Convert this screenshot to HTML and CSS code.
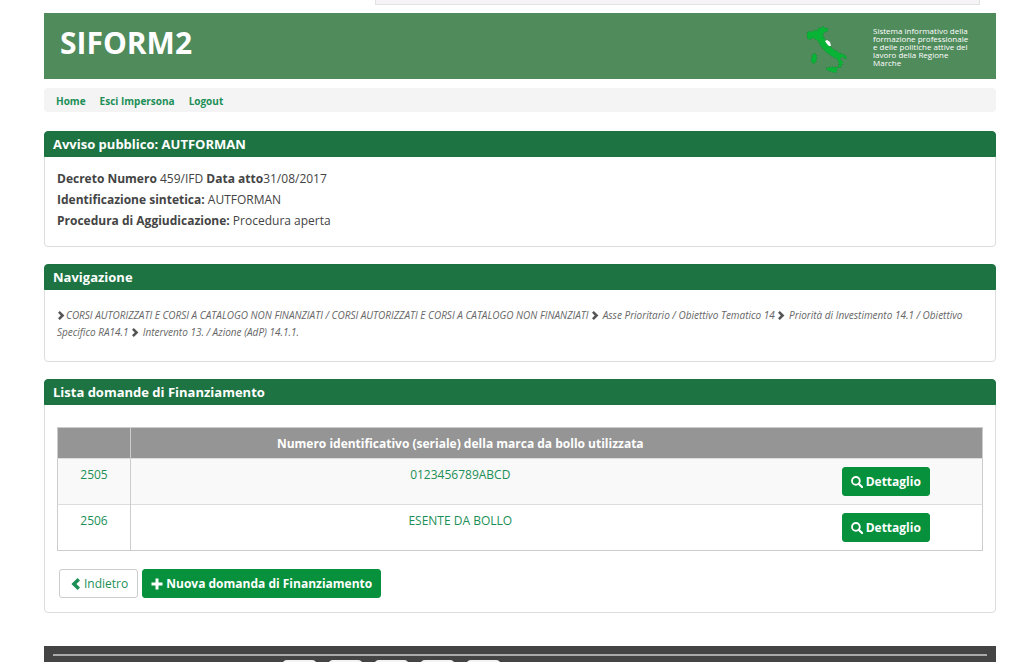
FILE: index.html
```html
<!DOCTYPE html>
<html lang="it">
<head>
<meta charset="utf-8">
<title>SIFORM2</title>
<link rel="stylesheet" href="styles.css">
</head>
<body>
<svg class="sprite" aria-hidden="true">
  <symbol id="chevron-right" viewBox="0 0 10 12"><path d="M1 2.4 3.4 0 9.6 6 3.4 12 1 9.6 4.6 6Z"/></symbol>
  <symbol id="chevron-left" viewBox="0 0 10 12"><path d="M9 2.4 6.6 0 .4 6l6.200 6L9 9.600 5.400 6Z"/></symbol>
  <symbol id="plus" viewBox="0 0 12 12"><path d="M4.500 .5h3v4h4v3h-4v4h-3v-4h-4v-3h4Z"/></symbol>
  <symbol id="search" viewBox="0 0 13 13"><circle cx="5.300" cy="5.300" r="4.200" fill="none" stroke="currentColor" stroke-width="2"/><path d="m8.300 8.300 3.700 3.700" stroke="currentColor" stroke-width="2.400" stroke-linecap="round"/></symbol>
</svg>
<div class="page">
  <div class="notice"></div>
  <header class="banner">
    <h1 class="brand">SIFORM2</h1>
    <svg class="map" viewBox="0 0 44 50" aria-hidden="true">
      <path class="land" d="M1 8 3 6 6 7 8 5 11 6 12 3 15 3 17 1 19 3 22 3 22 6 19 7 17 9 18 13 20 15 22 20 25 22 28 25 31 26 33 28 37 29 41 32 40 34 36 32 34 34 37 37 36 40 34 43 32 42 33 38 31 34 27 32 24 30 20 27 17 24 14 20 12 16 9 14 6 13 4 15 1 13Z"/>
      <path class="land" d="M6 30 9 28 11 31 10 37 7 39 5 36ZM20 43 25 42 32 42 30 48 26 47 21 45Z"/>
      <path class="marche" d="m19 16 2-1 3 2 1 4-2 0-2-2Z"/>
    </svg>
    <p class="tagline">Sistema informativo della formazione professionale e delle politiche attive del lavoro della Regione Marche</p>
  </header>
  <nav class="menu">
    <a href="#">Home</a>
    <a href="#">Esci Impersona</a>
    <a href="#">Logout</a>
  </nav>
  <main class="panels">
    <section class="panel">
      <h2 class="panel-title">Avviso pubblico: AUTFORMAN</h2>
      <div class="details">
        <p><strong>Decreto Numero</strong> 459/IFD <strong>Data atto</strong>31/08/2017</p>
        <p><strong>Identificazione sintetica:</strong> AUTFORMAN</p>
        <p><strong>Procedura di Aggiudicazione:</strong> Procedura aperta</p>
      </div>
    </section>
    <section class="panel">
      <h2 class="panel-title">Navigazione</h2>
      <p class="trail"><svg class="step"><use href="#chevron-right"/></svg>CORSI AUTORIZZATI E CORSI A CATALOGO NON FINANZIATI / CORSI AUTORIZZATI E CORSI A CATALOGO NON FINANZIATI <svg class="step"><use href="#chevron-right"/></svg> Asse Prioritario / Obiettivo Tematico 14 <svg class="step"><use href="#chevron-right"/></svg> Priorità di Investimento 14.1 / Obiettivo Specifico RA14.1 <svg class="step"><use href="#chevron-right"/></svg> Intervento 13. / Azione (AdP) 14.1.1.</p>
    </section>
    <section class="panel">
      <h2 class="panel-title">Lista domande di Finanziamento</h2>
      <div class="list">
        <table class="requests">
          <thead>
            <tr><th class="col-id"></th><th>Numero identificativo (seriale) della marca da bollo utilizzata</th><th class="col-action"></th></tr>
          </thead>
          <tbody>
            <tr><td class="col-id"><a href="#">2505</a></td><td><a href="#">0123456789ABCD</a></td><td class="col-action"><button class="btn btn-primary" type="button"><svg class="icon"><use href="#search"/></svg>Dettaglio</button></td></tr>
            <tr><td class="col-id"><a href="#">2506</a></td><td><a href="#">ESENTE DA BOLLO</a></td><td class="col-action"><button class="btn btn-primary" type="button"><svg class="icon"><use href="#search"/></svg>Dettaglio</button></td></tr>
          </tbody>
        </table>
        <div class="actions">
          <button class="btn btn-default" type="button"><svg class="icon icon-narrow"><use href="#chevron-left"/></svg>Indietro</button>
          <button class="btn btn-primary" type="button"><svg class="icon"><use href="#plus"/></svg>Nuova domanda di Finanziamento</button>
        </div>
      </div>
    </section>
  </main>
  <footer class="footer">
    <div class="logos"><span></span><span></span><span></span><span></span><span></span></div>
  </footer>
</div>
</body>
</html>
```

FILE: styles.css
```css
* { box-sizing: border-box; }
body {
  margin: 0;
  background: #fff;
  color: #444;
  font: 12px/21px "Open Sans", "Noto Sans", sans-serif;
}
h1, h2, p { margin: 0; }
a { color: #1c8f57; text-decoration: none; }
.sprite { display: none; }
.page {
  display: flex;
  flex-direction: column;
  height: 100vh;
  overflow: hidden;
  padding: 0 28px 0 44px;
}
.page > * { flex-shrink: 0; }

.notice {
  height: 5px;
  margin: 0 16px 8px 331px;
  background: #f5f3f5;
  border: solid #e2e2e2;
  border-width: 0 1px 1px;
}
.banner {
  display: flex;
  align-items: flex-start;
  height: 66px;
  padding: 12px 20px 0 16px;
  background: #508b5c;
  color: #fff;
}
.brand { flex: 1; font-size: 30px; line-height: 36px; font-weight: 700; }
.map { width: 44px; height: 50px; margin-right: 23px; }
.land { fill: #08b336; stroke: #23803c; stroke-width: 1; stroke-dasharray: 1 2; }
.marche { fill: #fff; }
.tagline { width: 103px; padding: 2px 4px 0 0; font-size: 8px; line-height: 8px; }

.menu {
  display: flex;
  gap: 14px;
  margin-top: 9px;
  padding: 3px 12px 0;
  background: #f4f4f4;
  border-radius: 4px;
  font-size: 10px;
  font-weight: 700;
}

.panels { display: grid; gap: 17px; margin-top: 19px; }
.panel {
  min-width: 0;
  border: 1px solid #ddd;
  border-radius: 4px;
  background: #fff;
}
.panel-title {
  margin: -1px -1px 0;
  padding: 3px 8px 2px;
  border: 1px solid #1a7240;
  border-radius: 4px 4px 0 0;
  background: #1d7342;
  color: #fff;
  font-size: 13px;
  line-height: 19px;
}
.details { padding: 11px 12px 15px; }
.trail {
  padding: 17px 12px 20px;
  color: #666;
  font-size: 10px;
  line-height: 17px;
  font-style: italic;
}
.step { width: 8px; height: 9px; margin-right: 1px; fill: #555; vertical-align: -1px; }

.list { padding: 22px 12px 14px; }
.requests {
  width: 100%;
  table-layout: fixed;
  border-collapse: collapse;
  border: 1px solid #ccc;
  text-align: center;
}
.requests th { height: 31px; padding: 0 8px; background: #959595; color: #fff; }
.requests td { height: 46px; padding: 5px 8px 0; border-top: 1px solid #ddd; vertical-align: top; }
.requests .col-id { width: 73px; border-right: 1px solid #ccc; }
.requests .col-action { width: 193px; }
.requests td.col-action { padding: 8px 0; }
.requests tbody tr:first-child { background: #f9f9f9; }

.btn {
  display: inline-flex;
  align-items: center;
  gap: 3px;
  height: 29px;
  padding: 0 8px;
  border: 1px solid #07913d;
  border-radius: 3px;
  font: 12px/18px "Open Sans", "Noto Sans", sans-serif;
}
.btn-primary { background: #07913d; color: #fff; font-weight: 700; }
.btn-default { background: #fff; border-color: #ccc; color: #1c8f57; padding: 0 9px 0 11px; }
.icon { width: 12px; height: 12px; fill: currentColor; }
.icon-narrow { width: 10px; }
.actions { display: flex; gap: 4px; margin: 18px 2px 0; }

.footer { margin-top: 33px; padding: 8px 9px; background: #444; }
.logos { display: flex; gap: 11px; padding: 4px 0 0 229px; border-top: 2px solid #aaa; }
.logos span { width: 35px; height: 30px; border-radius: 5px; background: #f4f4f4; }
```
